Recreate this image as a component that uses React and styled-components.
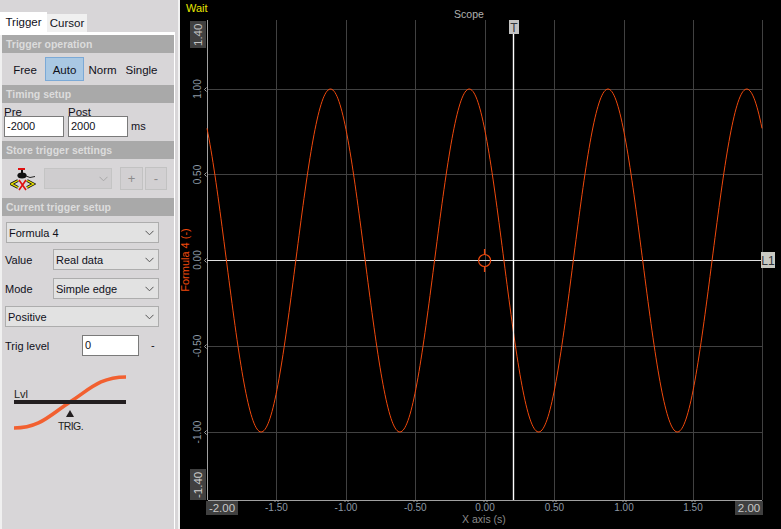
import React from "react";
import styled, { createGlobalStyle } from "styled-components";

const Global = createGlobalStyle`
  html, body { margin: 0; padding: 0; background: #000; }
  body { font-family: "Liberation Sans", Arial, sans-serif; font-size: 11px; color: #10101a; }
  #root { width: 781px; height: 529px; overflow: hidden; }
`;

const Page = styled.div`
  display: flex;
  width: 781px;
  height: 529px;
  background: #000;
`;

const Sidebar = styled.aside`
  width: 178px;
  height: 529px;
  flex: none;
  display: flex;
  flex-direction: column;
  background: #d8d6d8;
  border-right: 2px solid #f2f2f2;
`;

const TabStrip = styled.div`
  display: flex;
  align-items: flex-end;
  height: 32px;
  flex: none;
`;

const Tab = styled.div`
  display: flex;
  align-items: center;
  justify-content: center;
  width: ${(p) => p.$w}px;
  height: ${(p) => (p.$active ? 20 : 18)}px;
  font-size: 11.5px;
  background: ${(p) => (p.$active ? "#fff" : "#f0f0f0")};
`;

const Panel = styled.div`
  flex: 1;
  width: 172px;
  padding: 3px 1px 0 2px;
  background: #d8d6d8;
  box-shadow: inset 0 3px 0 #fff, inset 2px 0 0 #f0f0f0, inset -1px 0 0 #fff;
  display: flex;
  flex-direction: column;
`;

const Header = styled.div`
  height: 18px;
  flex: none;
  background: #a9a9a9;
  color: #dcdcdc;
  font-weight: 700;
  font-size: 10.5px;
  line-height: 18px;
  padding-left: 4px;
`;

const OpRow = styled.div`
  height: 32px;
  display: grid;
  grid-template-columns: 43px 39px 37px 41px;
  align-items: center;
  justify-items: center;
`;

const OpButton = styled.div`
  width: 100%;
  height: 24px;
  display: flex;
  align-items: center;
  justify-content: center;
  box-sizing: border-box;
  padding-left: ${(p) => p.$pad || 0}px;
  padding-top: 1px;
  font-size: 11.5px;
  background: ${(p) => (p.$on ? "#a9c8e3" : "transparent")};
  border: 1px solid ${(p) => (p.$on ? "#7ba9d6" : "transparent")};
`;

const TimingRow = styled.div`
  height: 38px;
  display: flex;
  padding: 3px 0 4px 2px;
  gap: 4px;
  align-items: flex-end;
  box-sizing: border-box;
`;

const Field = styled.div`
  display: flex;
  flex-direction: column;
`;

const SmallLabel = styled.label`
  line-height: 11px;
  height: 11px;
  margin-bottom: -1px;
  font-size: 11.5px;
  position: relative;
  top: 1px;
`;

const Input = styled.div`
  box-sizing: border-box;
  width: ${(p) => p.$w}px;
  height: 21px;
  line-height: 19px;
  padding-left: 2px;
  background: #fff;
  border: 1px solid #7a7a7a;
`;

const Unit = styled.span`
  line-height: 21px;
  margin-left: ${(p) => p.$gap || 0}px;
`;

const StoreRow = styled.div`
  height: 39px;
  display: flex;
  align-items: center;
  padding-left: 8px;
`;

const StoreSelect = styled.div`
  width: 68px;
  height: 21px;
  box-sizing: border-box;
  margin-left: 8px;
  background: #cfcdcf;
  border: 1px solid #c4c4c4;
  display: flex;
  align-items: center;
  justify-content: flex-end;
  padding-right: 3px;
`;

const SmallButton = styled.div`
  width: ${(p) => p.$w}px;
  height: 23px;
  box-sizing: border-box;
  margin-left: ${(p) => p.$gap}px;
  background: #d2d0d2;
  border: 1px solid #c2c2c2;
  color: #8c8c8c;
  font-size: 13px;
  display: flex;
  align-items: center;
  justify-content: center;
`;

const Setup = styled.div`
  display: flex;
  flex-direction: column;
  padding: 6px 0 0 3px;
`;

const SelectRow = styled.div`
  display: flex;
  align-items: center;
  height: 21px;
  margin-bottom: ${(p) => p.$mb}px;
  margin-left: ${(p) => p.$ml || 0}px;
`;

const RowLabel = styled.span`
  width: ${(p) => p.$w}px;
  flex: none;
`;

const Select = styled.div`
  flex: none;
  width: ${(p) => p.$w}px;
  height: 21px;
  box-sizing: border-box;
  display: flex;
  align-items: center;
  justify-content: space-between;
  padding: 0 4px 0 2px;
  background: #e2e2e2;
  border: 1px solid #adadad;
`;

const LevelRow = styled.div`
  display: flex;
  align-items: center;
  height: 21px;
  margin-top: 8px;
`;

const Diagram = styled.svg`
  display: block;
  margin: 18px 0 0 9px;
`;

const DiagramText = styled.text`
  font-family: "Liberation Sans", Arial, sans-serif;
  font-size: ${(p) => p.$size}px;
  letter-spacing: ${(p) => p.$track || 0}px;
  fill: #231f20;
`;

const Scope = styled.svg`
  display: block;
  flex: none;
`;

const Chevron = ({ color = "#555" }) => (
  <svg width="9" height="6" viewBox="0 0 9 6">
    <path d="M0.5 0.8 L4.5 4.8 L8.5 0.8" fill="none" stroke={color} strokeWidth="1" />
  </svg>
);

const StoreIcon = () => (
  <svg width="26" height="24" viewBox="0 0 26 24">
    <rect x="8" y="1" width="7" height="2" fill="#e01010" />
    <rect x="11" y="3" width="2" height="3" fill="#111" />
    <ellipse cx="12" cy="8.5" rx="4.6" ry="3" fill="#111" />
    <path d="M16 9 L20 10.5 L25 9.5" fill="none" stroke="#222" strokeWidth="1" />
    <path d="M8 13.5 L1.5 17 L8 20.5" fill="none" stroke="#111" strokeWidth="3" />
    <path d="M17 13.5 L23.5 17 L17 20.5" fill="none" stroke="#111" strokeWidth="3" />
    <path d="M8 13.5 L1.5 17 L8 20.5" fill="none" stroke="#f0e800" strokeWidth="1.4" />
    <path d="M17 13.5 L23.5 17 L17 20.5" fill="none" stroke="#f0e800" strokeWidth="1.4" />
    <path d="M9 13 L16 23 M16 13 L9 23" stroke="#e01010" strokeWidth="1.6" />
  </svg>
);

const X0 = 180;
const xs = [207, 276.4, 346, 415.3, 485, 554.4, 624, 693, 762].map((v) => v - X0);
const xLabels = ["", "-1.50", "-1.00", "-0.50", "0.00", "0.50", "1.00", "1.50", ""];
const ys = [89, 174.5, 260, 346, 432];
const yLabels = ["1.00", "0.50", "0.00", "-0.50", "-1.00"];

const wave = (() => {
  const pts = [];
  for (let px = 207; px <= 762; px += 1) {
    const t = -2 + ((px - 207) / 555) * 4;
    const v = Math.cos(2 * Math.PI * (t + 0.11));
    pts.push(`${px - X0},${(260.5 - v * 171.5).toFixed(2)}`);
  }
  return pts.join(" ");
})();

const ScopeText = styled.text`
  font-family: "Liberation Sans", Arial, sans-serif;
  font-size: ${(p) => p.$size || 10}px;
  fill: ${(p) => p.$color || "#9a9a9a"};
`;

const ScopeView = () => (
  <Scope width="601" height="529" viewBox="0 0 601 529">
    <rect width="601" height="529" fill="#000" />
    {xs.slice(1).map((x) => (
      <line key={x} x1={Math.round(x) + 0.5} x2={Math.round(x) + 0.5} y1="20" y2="500" stroke="#414141" />
    ))}
    {ys.map((y) => (
      <line key={y} x1="27" x2="582" y1={Math.floor(y) + 0.5} y2={Math.floor(y) + 0.5} stroke="#414141" />
    ))}
    <line x1="27.5" x2="27.5" y1="20" y2="500" stroke="#a0a0a0" />
    <line x1="28" x2="582" y1="500.5" y2="500.5" stroke="#a0a0a0" />
    {ys.map((y) => (
      <path key={y} d={`M26.5 ${Math.floor(y) - 1.5} L24.5 ${Math.floor(y) + 0.5} L26.5 ${Math.floor(y) + 2.5}`} fill="none" stroke="#a0a0a0" />
    ))}
    {xs.slice(1, 8).map((x) => (
      <path key={x} d={`M${Math.round(x) - 1.5} 502 L${Math.round(x) + 0.5} 500 L${Math.round(x) + 2.5} 502`} fill="none" stroke="#a0a0a0" />
    ))}
    <line x1="27" x2="582" y1="260.5" y2="260.5" stroke="#e0e0e0" />
    <polyline points={wave} fill="none" stroke="#f0490c" strokeWidth="1" />
    <line x1="333.5" x2="333.5" y1="34" y2="500" stroke="#fff" strokeWidth="1.4" />
    <rect x="329" y="20" width="10" height="14" fill="#c2c2c2" />
    <ScopeText x="334" y="32" $size={12} $color="#33383e" textAnchor="middle">T</ScopeText>
    <rect x="581" y="252" width="14" height="16" fill="#c9c9c2" />
    <ScopeText x="588" y="264.5" $size={12} $color="#30343a" textAnchor="middle">L1</ScopeText>
    <circle cx="304.6" cy="260.5" r="6" fill="none" stroke="#f0490c" strokeWidth="1.2" />
    <line x1="304.6" x2="304.6" y1="249" y2="254.5" stroke="#f0490c" strokeWidth="1.4" />
    <line x1="304.6" x2="304.6" y1="266.5" y2="272" stroke="#f0490c" strokeWidth="1.4" />

    <ScopeText x="6" y="12" $size={11} $color="#e6e600">Wait</ScopeText>
    <ScopeText x="289" y="18" $size={10.5} $color="#b0b0b0" textAnchor="middle">Scope</ScopeText>

    <rect x="10" y="21" width="16" height="27" fill="#404040" />
    <ScopeText transform="translate(22 46) rotate(-90)" $size={11.5} $color="#c4c4c4">1.40</ScopeText>
    <rect x="10" y="469" width="16" height="31" fill="#404040" />
    <ScopeText transform="translate(22 498) rotate(-90)" $size={11.5} $color="#d0d0d0">-1.40</ScopeText>
    {ys.map((y, i) => (
      <ScopeText key={y} transform={`translate(21 ${y}) rotate(-90)`} textAnchor="middle" $color="#8c98a4">
        {yLabels[i]}
      </ScopeText>
    ))}
    <ScopeText transform="translate(9 260) rotate(-90)" textAnchor="middle" $size={11} $color="#f0490c">Formula 4 (-)</ScopeText>

    <rect x="26" y="501" width="32" height="14" fill="#404040" />
    <ScopeText x="42" y="512" textAnchor="middle" $size={11.5} $color="#c8c8c8">-2.00</ScopeText>
    <rect x="555" y="501" width="28" height="14" fill="#404040" />
    <ScopeText x="569" y="512" textAnchor="middle" $size={11.5} $color="#c8c8c8">2.00</ScopeText>
    {xs.map((x, i) =>
      xLabels[i] ? (
        <ScopeText key={x} x={x} y="511" textAnchor="middle" $color="#8c98a4">
          {xLabels[i]}
        </ScopeText>
      ) : null
    )}
    <ScopeText x="304" y="523" textAnchor="middle" $size={10.5} $color="#8a8a8a">X axis (s)</ScopeText>
  </Scope>
);

export default function App() {
  return (
    <Page>
      <Global />
      <Sidebar>
        <TabStrip>
          <Tab $active $w={47}>Trigger</Tab>
          <Tab $w={40}>Cursor</Tab>
        </TabStrip>
        <Panel>
          <Header>Trigger operation</Header>
          <OpRow>
            <OpButton $pad={3}>Free</OpButton>
            <OpButton $on>Auto</OpButton>
            <OpButton>Norm</OpButton>
            <OpButton>Single</OpButton>
          </OpRow>
          <Header>Timing setup</Header>
          <TimingRow>
            <Field>
              <SmallLabel>Pre</SmallLabel>
              <Input $w={60}>-2000</Input>
            </Field>
            <Field>
              <SmallLabel>Post</SmallLabel>
              <Input $w={60}>2000</Input>
            </Field>
            <Unit $gap={-1}>ms</Unit>
          </TimingRow>
          <Header>Store trigger settings</Header>
          <StoreRow>
            <StoreIcon />
            <StoreSelect><Chevron color="#a8a8a8" /></StoreSelect>
            <SmallButton $w={23} $gap={8}>+</SmallButton>
            <SmallButton $w={22} $gap={2}>-</SmallButton>
          </StoreRow>
          <Header>Current trigger setup</Header>
          <Setup>
            <SelectRow $mb={6} $ml={1}>
              <Select $w={153}>Formula 4<Chevron /></Select>
            </SelectRow>
            <SelectRow $mb={8}>
              <RowLabel $w={48}>Value</RowLabel>
              <Select $w={106}>Real data<Chevron /></Select>
            </SelectRow>
            <SelectRow $mb={7}>
              <RowLabel $w={48}>Mode</RowLabel>
              <Select $w={106}>Simple edge<Chevron /></Select>
            </SelectRow>
            <SelectRow $mb={0}>
              <Select $w={154}>Positive<Chevron /></Select>
            </SelectRow>
            <LevelRow>
              <RowLabel $w={77}>Trig level</RowLabel>
              <Input $w={57}>0</Input>
              <Unit $gap={12}>-</Unit>
            </LevelRow>
            <Diagram width="113" height="58" viewBox="0 0 113 58">
              <path d="M0 54 C26 54 36 41 56 28 S86 3 112 3" fill="none" stroke="#f26030" strokeWidth="3.6" />
              <rect x="0" y="26" width="112" height="4" fill="#231f20" />
              <DiagramText x="0" y="24" $size={11}>Lvl</DiagramText>
              <path d="M56 36 L60 43 L52 43 Z" fill="#231f20" />
              <DiagramText x="44" y="56" $size={10.5} $track={-0.6}>TRIG.</DiagramText>
            </Diagram>
          </Setup>
        </Panel>
      </Sidebar>
      <ScopeView />
    </Page>
  );
}
